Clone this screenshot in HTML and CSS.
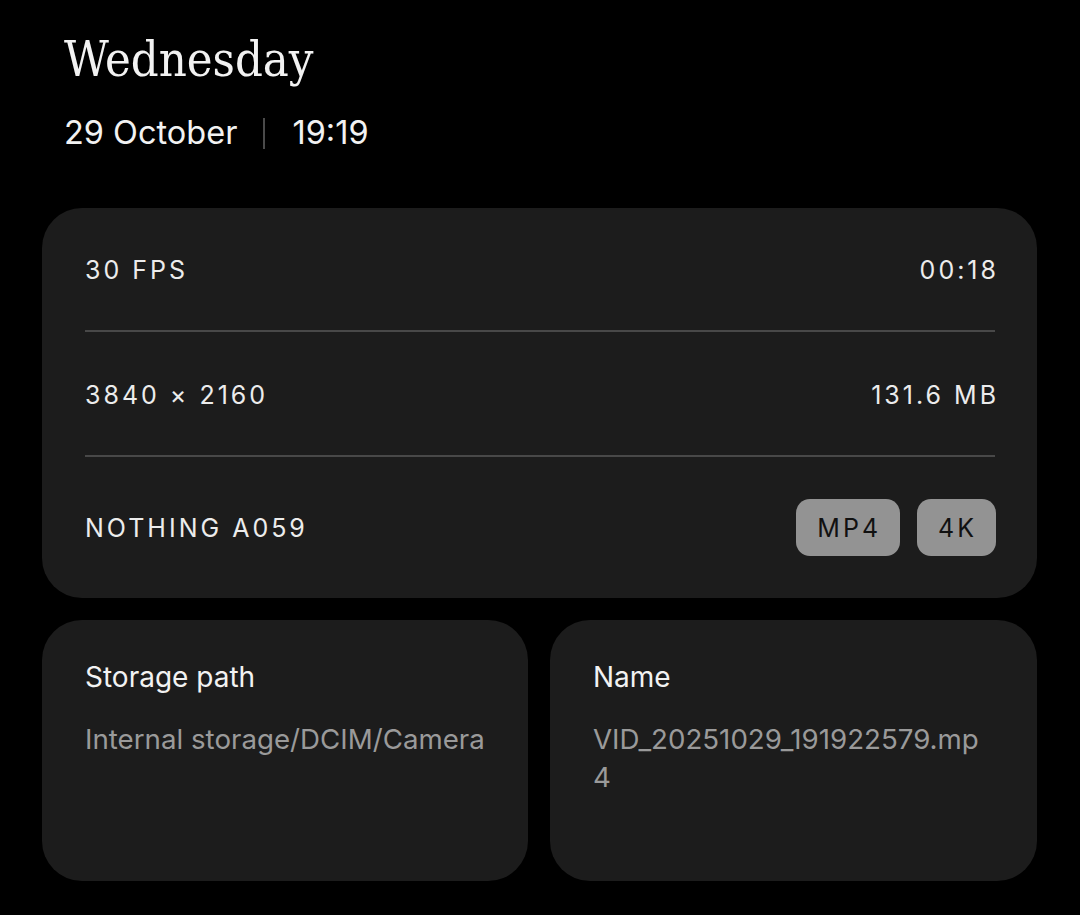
FILE: index.html
```html
<!DOCTYPE html>
<html lang="en">
<head>
<meta charset="utf-8">
<title>Video details</title>
<link rel="stylesheet" href="styles.css">
</head>
<body>
<main class="page">
  <header class="head">
    <h1 class="day">Wednesday</h1>
    <div class="when">
      <span class="date">29 October</span>
      <span class="sep"></span>
      <span class="time">19:19</span>
    </div>
  </header>

  <section class="card specs">
    <div class="row row-first">
      <span class="spec">30 FPS</span>
      <span class="spec spec-end">00:18</span>
    </div>
    <div class="rule"></div>
    <div class="row">
      <span class="spec">3840 × 2160</span>
      <span class="spec spec-end">131.6 MB</span>
    </div>
    <div class="rule"></div>
    <div class="row row-last">
      <span class="spec">NOTHING A059</span>
      <div class="badges">
        <span class="badge">MP4</span>
        <span class="badge">4K</span>
      </div>
    </div>
  </section>

  <section class="pair">
    <div class="card info">
      <div class="info-label">Storage path</div>
      <div class="info-value">Internal storage/DCIM/Camera</div>
    </div>
    <div class="card info">
      <div class="info-label">Name</div>
      <div class="info-value">VID_20251029_191922579.mp4</div>
    </div>
  </section>
</main>
</body>
</html>
```

FILE: styles.css
```css
* { box-sizing: border-box; }
html, body { margin: 0; padding: 0; background: #000; }
body {
  font-family: Inter, "Noto Sans", "Liberation Sans", sans-serif;
  color: #f2f2f2;
  width: 1080px;
  height: 915px;
  overflow: hidden;
}
.page {
  padding: 0 43px 0 42px;
}
.head {
  padding: 25px 0 0 22px;
  height: 208px;
}
.day {
  margin: 0;
  font-family: "DejaVu Serif", "Liberation Serif", serif;
  font-stretch: condensed;
  font-weight: 400;
  font-size: 48.5px;
  line-height: 68px;
  letter-spacing: 0;
  color: #f2f2f2;
}
.when {
  display: flex;
  align-items: center;
  margin-top: 20px;
  font-size: 32.5px;
  line-height: 40px;
  color: #f2f2f2;
}
.sep {
  width: 2px;
  height: 31px;
  background: #4a4a4a;
  margin: 0 27px 0 26px;
}
.card {
  background: #1c1c1c;
  border-radius: 40px;
}
.specs {
  padding: 0 42px 0 43px;
}
.row {
  display: flex;
  align-items: center;
  justify-content: space-between;
  height: 123px;
  padding-top: 2px;
}
.row-first { height: 122px; }
.row-last { height: 141px; padding-top: 0; }
.spec {
  font-size: 25px;
  letter-spacing: 3px;
  color: #ececec;
}
.spec-end { margin-right: -4px; }
.rule {
  height: 2px;
  background: #484848;
}
.badges {
  display: flex;
  gap: 17px;
  margin-right: -1px;
}
.badge {
  display: flex;
  align-items: center;
  justify-content: center;
  height: 57px;
  padding: 0 19px 0 21px;
  border-radius: 14px;
  background: #939393;
  color: #111;
  font-size: 25px;
  letter-spacing: 3px;
}
.pair {
  display: grid;
  grid-template-columns: 486px 487px;
  gap: 22px;
  margin-top: 22px;
}
.info {
  height: 261px;
  padding: 40px 43px 0 43px;
}
.info-label {
  font-size: 28px;
  line-height: 34px;
  color: #f2f2f2;
}
.info-value {
  margin-top: 26px;
  font-size: 27.7px;
  line-height: 38px;
  color: #9a9a9a;
  word-break: break-all;
}
```
